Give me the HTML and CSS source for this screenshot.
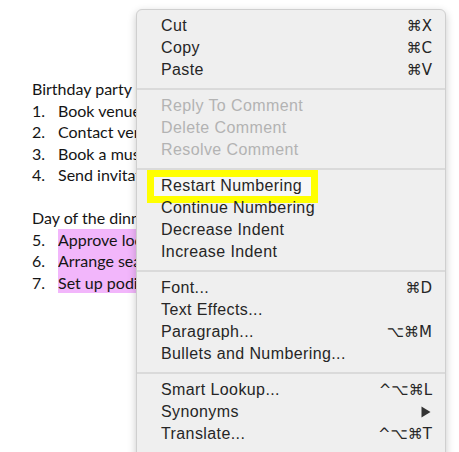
FILE: index.html
```html
<!DOCTYPE html>
<html>
<head>
<meta charset="utf-8">
<link rel="stylesheet" href="styles.css">
</head>
<body>
<div class="page">
  <div class="doc">
    <p class="line">Birthday party planning</p>
    <ol class="list">
      <li><span class="num">1.</span><span class="txt">Book venue for the party</span></li>
      <li><span class="num">2.</span><span class="txt">Contact vendors for food</span></li>
      <li><span class="num">3.</span><span class="txt">Book a musician</span></li>
      <li><span class="num">4.</span><span class="txt">Send invitations</span></li>
    </ol>
    <p class="line gap">Day of the dinner</p>
    <ol class="list">
      <li><span class="num">5.</span><span class="txt hl">Approve location setup</span></li>
      <li><span class="num">6.</span><span class="txt hl">Arrange seating</span></li>
      <li><span class="num">7.</span><span class="txt hl">Set up podium</span></li>
    </ol>
  </div>

  <div class="menu">
    <div class="item"><span>Cut</span><span class="key">⌘X</span></div>
    <div class="item"><span>Copy</span><span class="key">⌘C</span></div>
    <div class="item"><span>Paste</span><span class="key">⌘V</span></div>
    <div class="sep"></div>
    <div class="item off"><span>Reply To Comment</span></div>
    <div class="item off"><span>Delete Comment</span></div>
    <div class="item off"><span>Resolve Comment</span></div>
    <div class="sep"></div>
    <div class="item marked"><span class="label">Restart Numbering</span></div>
    <div class="item"><span>Continue Numbering</span></div>
    <div class="item"><span>Decrease Indent</span></div>
    <div class="item"><span>Increase Indent</span></div>
    <div class="sep"></div>
    <div class="item"><span>Font...</span><span class="key">⌘D</span></div>
    <div class="item"><span>Text Effects...</span></div>
    <div class="item"><span>Paragraph...</span><span class="key">⌥⌘M</span></div>
    <div class="item"><span>Bullets and Numbering...</span></div>
    <div class="sep"></div>
    <div class="item"><span>Smart Lookup...</span><span class="key">^⌥⌘L</span></div>
    <div class="item"><span>Synonyms</span><svg class="arrow" width="10" height="12" viewBox="0 0 10 12"><polygon points="0.5,0.5 9.5,6 0.5,11.5" fill="#333"/></svg></div>
    <div class="item"><span>Translate...</span><span class="key">^⌥⌘T</span></div>
    <div class="sep"></div>
  </div>
</div>
</body>
</html>
```

FILE: styles.css
```css
html, body {
  margin: 0;
  padding: 0;
  background: #ffffff;
}
.page {
  position: relative;
  width: 459px;
  height: 452px;
  overflow: hidden;
}
.doc {
  width: 105px;
  overflow: hidden;
  padding: 78px 0 0 32px;
  font-family: Lato, "Liberation Sans", sans-serif;
  font-size: 16px;
  line-height: 21.5px;
  color: #151515;
}
.line {
  margin: 0;
  white-space: nowrap;
}
.line.gap {
  margin-top: 21.5px;
}
.list {
  list-style: none;
  margin: 0;
  padding: 0;
}
.list li {
  display: flex;
  white-space: nowrap;
}
.num {
  width: 26px;
  flex: none;
}
.txt {
  flex: 1;
  overflow: hidden;
}
.hl {
  background: #f2b6fb;
}
.menu {
  position: absolute;
  left: 136px;
  top: 9px;
  width: 308px;
  padding-top: 5px;
  background: #efefef;
  border: 1px solid #cfcfcf;
  border-radius: 6px;
  box-shadow: 0 3px 8px rgba(0, 0, 0, 0.22);
  font-family: "Liberation Sans", Arial, sans-serif;
  font-size: 16px;
  letter-spacing: 0.4px;
  color: #262626;
}
.item {
  position: relative;
  display: flex;
  justify-content: space-between;
  align-items: center;
  height: 22px;
  padding: 0 13px 0 24px;
  white-space: nowrap;
}
.item.off {
  color: #b3b3b3;
}
.key {
  font-family: "DejaVu Sans", "Liberation Sans", sans-serif;
  font-size: 15px;
  letter-spacing: 0;
}
.arrow {
  margin-right: 1px;
}
.sep {
  height: 2px;
  background: #dadada;
  margin: 7px 0 5px;
}
.marked::before {
  content: "";
  position: absolute;
  left: 10px;
  top: -5px;
  width: 157px;
  height: 19px;
  border: 7px solid #ffff00;
  background: #f7f7f7;
}
.marked .label {
  position: relative;
}
```
